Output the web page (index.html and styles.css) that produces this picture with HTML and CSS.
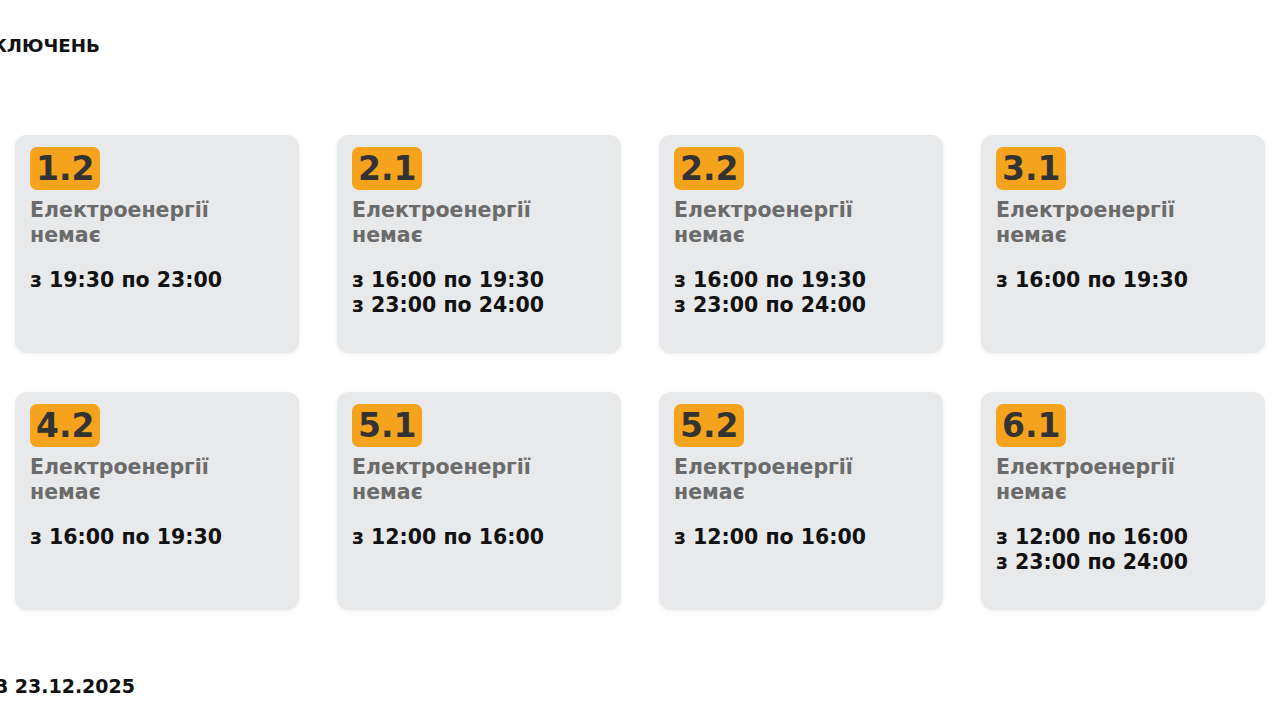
FILE: index.html
```html
<!DOCTYPE html>
<html lang="uk">
<head>
<meta charset="utf-8">
<link rel="stylesheet" href="styles.css">
</head>
<body>
<div class="page">
  <div class="clip-title"><h1 class="title">ГРАФІК ВІДКЛЮЧЕНЬ</h1></div>
  <div class="grid">
    <div class="card"><span class="badge">1.2</span><p class="status">Електроенергії немає</p><p class="times">з 19:30 по 23:00</p></div>
    <div class="card"><span class="badge">2.1</span><p class="status">Електроенергії немає</p><p class="times">з 16:00 по 19:30<br>з 23:00 по 24:00</p></div>
    <div class="card"><span class="badge">2.2</span><p class="status">Електроенергії немає</p><p class="times">з 16:00 по 19:30<br>з 23:00 по 24:00</p></div>
    <div class="card"><span class="badge">3.1</span><p class="status">Електроенергії немає</p><p class="times">з 16:00 по 19:30</p></div>
    <div class="card"><span class="badge">4.2</span><p class="status">Електроенергії немає</p><p class="times">з 16:00 по 19:30</p></div>
    <div class="card"><span class="badge">5.1</span><p class="status">Електроенергії немає</p><p class="times">з 12:00 по 16:00</p></div>
    <div class="card"><span class="badge">5.2</span><p class="status">Електроенергії немає</p><p class="times">з 12:00 по 16:00</p></div>
    <div class="card"><span class="badge">6.1</span><p class="status">Електроенергії немає</p><p class="times">з 12:00 по 16:00<br>з 23:00 по 24:00</p></div>
  </div>
  <div class="clip-foot"><p class="foot">ОНОВЛЕНО В 23.12.2025</p></div>
</div>
</body>
</html>
```

FILE: styles.css
```css
html, body {
  margin: 0;
  padding: 0;
  background: #ffffff;
}
body {
  font-family: "DejaVu Sans", sans-serif;
  overflow: hidden;
}
.page {
  width: 1280px;
  height: 720px;
  padding: 0 15px;
  box-sizing: border-box;
}
.clip-title {
  display: flex;
  justify-content: flex-end;
  width: 100px;
  margin-left: -15px;
  overflow: hidden;
  padding-top: 35px;
}
.title {
  margin: 0;
  font-size: 18.3px;
  line-height: 22px;
  font-weight: bold;
  color: #111;
  white-space: nowrap;
}
.grid {
  display: grid;
  grid-template-columns: repeat(4, 1fr);
  column-gap: 38px;
  row-gap: 39px;
  margin-top: 78px;
}
.card {
  background: #e8e9eb;
  border-radius: 12px;
  box-shadow: 0 1px 4px rgba(0, 0, 0, 0.08);
  height: 218px;
  box-sizing: border-box;
  padding: 12px 15px;
}
.badge {
  display: inline-block;
  background: #f5a31c;
  color: #333;
  font-weight: bold;
  font-size: 33px;
  line-height: 43px;
  height: 43px;
  padding: 0 6px;
  border-radius: 7px;
}
.status {
  margin: 8px 0 0;
  color: #6b6b6b;
  font-size: 20.5px;
  line-height: 25px;
  font-weight: bold;
  width: 200px;
}
.times {
  margin: 20px 0 0;
  color: #111;
  font-size: 20.5px;
  line-height: 25px;
  font-weight: bold;
}
.clip-foot {
  display: flex;
  justify-content: flex-end;
  width: 135px;
  margin-left: -15px;
  overflow: hidden;
  margin-top: 65px;
}
.foot {
  margin: 0;
  font-size: 19px;
  line-height: 22px;
  font-weight: bold;
  color: #111;
  white-space: nowrap;
}
```
